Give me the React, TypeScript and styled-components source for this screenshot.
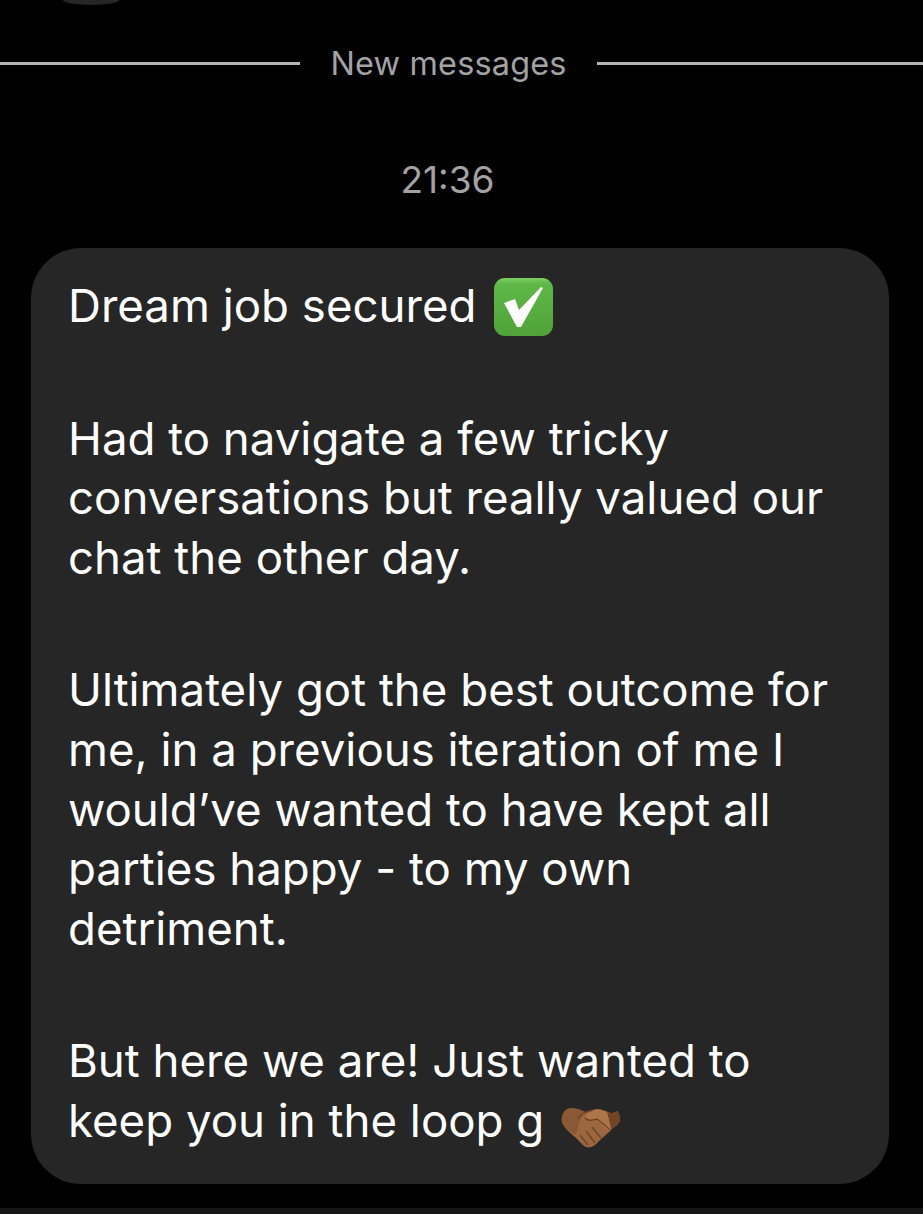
import React from "react";
import styled, { createGlobalStyle } from "styled-components";

const Global = createGlobalStyle`
  html, body { margin: 0; padding: 0; background: #000; }
  #root { width: 923px; height: 1214px; overflow: hidden; }
`;

const Screen = styled.div`
  width: 923px;
  height: 1214px;
  background: #000;
  display: flex;
  flex-direction: column;
  font-family: Inter, "Liberation Sans", sans-serif;
  overflow: hidden;
`;

const AvatarStub = styled.div`
  width: 56px;
  height: 5px;
  margin-left: 63px;
  background: #262626;
  border-radius: 0 0 28px 28px / 0 0 5px 5px;
  flex: none;
`;

const Divider = styled.div`
  display: flex;
  align-items: center;
  height: 36px;
  margin-top: 40px;
  flex: none;
`;

const Rule = styled.div<{ $width: number }>`
  height: 3px;
  width: ${(p) => p.$width}px;
  flex: ${(p) => (p.$width ? "none" : "1")};
  background: #b4b4b4;
`;

const DividerLabel = styled.span`
  width: 297px;
  padding-top: 2px;
  text-align: center;
  color: #a3a3a3;
  font-size: 32.4px;
  line-height: 36px;
  letter-spacing: 0.2px;
`;

const Time = styled.div`
  margin-top: 79px;
  padding-right: 28px;
  height: 40px;
  line-height: 40px;
  text-align: center;
  color: #a3a3a3;
  font-size: 37px;
  flex: none;
`;

const Bubble = styled.div`
  margin: 48px 34px 0 31px;
  padding: 28px 30px 30px 37px;
  height: 936px;
  box-sizing: border-box;
  background: #262626;
  border-radius: 50px;
  color: #fff;
  font-size: 45.6px;
  line-height: 59.7px;
  flex: none;
`;

const Paragraph = styled.p`
  margin: 0 0 72.6px;
  white-space: nowrap;
`;

const Emoji = styled.svg<{ $drop: number; $gap: number }>`
  display: inline-block;
  vertical-align: ${(p) => p.$drop}px;
  margin-left: ${(p) => p.$gap}px;
`;

const BottomStrip = styled.div`
  margin-top: auto;
  height: 6px;
  background: #161616;
  flex: none;
`;

const CheckEmoji = () => (
  <Emoji $drop={-14} $gap={18} width="59" height="58" viewBox="0 0 59 58">
    <defs>
      <linearGradient id="g" x1="0" y1="0" x2="0" y2="1">
        <stop offset="0" stopColor="#7fd063" />
        <stop offset="0.1" stopColor="#5fb848" />
        <stop offset="1" stopColor="#4fa338" />
      </linearGradient>
    </defs>
    <rect x="0" y="0" width="59" height="58" rx="11" fill="url(#g)" />
    <path d="M10 25 L21 21 L25 32 L47 9 L49 10 L27 49 L23 49 Z" fill="#fff" />
  </Emoji>
);

const HandshakeEmoji = () => (
  <Emoji $drop={-11} $gap={17} width="60" height="41" viewBox="0 0 60 41">
    <path d="M6 2 C12 0 18 2 24 5 L32 3 C38 1 42 3 47 5 C50 7 53 6 56 4 C60 9 60 14 56 18 C52 21 50 22 48 25 L38 34 C33 41 26 42 22 38 L14 30 C9 26 3 21 1 15 C0 10 2 5 6 2 Z" fill="#9c673e" />
    <path d="M6 2 C12 0 18 2 24 5 L19 13 L15 28 C9 25 3 21 1 15 C0 10 2 5 6 2 Z" fill="#8a5834" />
    <path d="M46 5 C50 7 53 6 56 4 C60 9 60 14 56 18 C53 20 51 21 50 22 Z" fill="#6f4526" />
    <path d="M32 3 C38 1 42 3 46 5 L50 22 L48 25 L36 12 C32 14 28 15 25 13 C23 12 24 9 26 7 Z" fill="#ad7549" />
    <path d="M17 12 C18 8 23 5 32 3 M24 11 C27 15 32 13 36 12 C42 16 47 21 50 24" fill="none" stroke="#6e4325" strokeWidth="1.3" />
    <path d="M31 20 L40 31 M25 24 L34 36 M19 28 L27 38" stroke="#6e4325" strokeWidth="1.3" fill="none" />
  </Emoji>
);

export default function App() {
  return (
    <Screen>
      <Global />
      <AvatarStub />
      <Divider>
        <Rule $width={300} />
        <DividerLabel>New messages</DividerLabel>
        <Rule $width={0} />
      </Divider>
      <Time>21:36</Time>
      <Bubble>
        <Paragraph>
          Dream job secured
          <CheckEmoji />
        </Paragraph>
        <Paragraph>
          Had to navigate a few tricky
          <br />
          conversations but really valued our
          <br />
          chat the other day.
        </Paragraph>
        <Paragraph>
          Ultimately got the best outcome for
          <br />
          me, in a previous iteration of me I
          <br />
          would’ve wanted to have kept all
          <br />
          parties happy - to my own
          <br />
          detriment.
        </Paragraph>
        <Paragraph>
          But here we are! Just wanted to
          <br />
          keep you in the loop g
          <HandshakeEmoji />
        </Paragraph>
      </Bubble>
      <BottomStrip />
    </Screen>
  );
}
